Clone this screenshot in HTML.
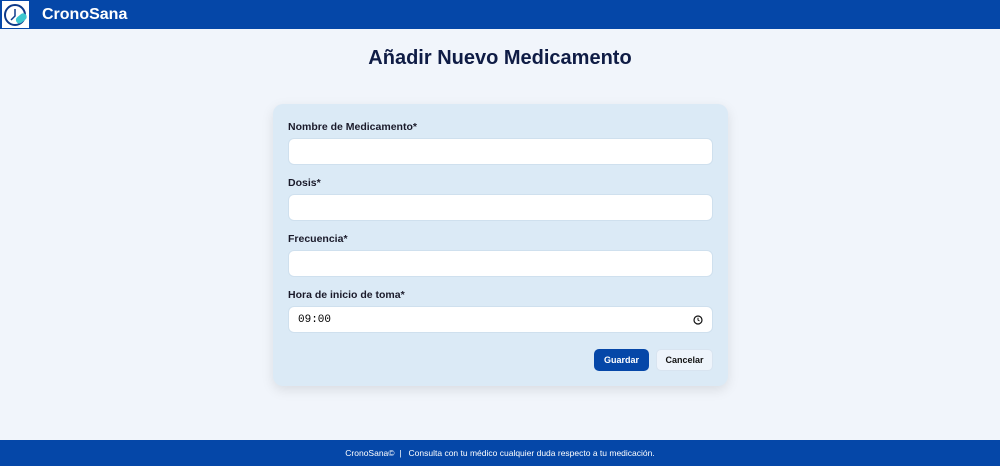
<!DOCTYPE html>
<html><head><meta charset="utf-8"><style>
*{box-sizing:border-box;margin:0;padding:0}
body{width:1000px;height:466px;background:#f1f5fb;font-family:"Liberation Sans",sans-serif;position:relative;overflow:hidden}
.nav{height:29px;background:#0547a8;display:flex;align-items:center}
.logo{width:29px;height:29px;background:#fff;margin-left:1px;border:1px solid #0547a8}
.brand{color:#fff;font-weight:bold;font-size:16px;margin-left:12px}
h1{text-align:center;color:#0f1c45;font-size:20px;font-weight:bold;margin-top:18px}
.card{position:absolute;left:273px;top:104px;width:455px;height:282px;background:#dbeaf6;border-radius:10px;box-shadow:0 4px 12px rgba(0,0,0,.1);padding:0 15px}
label{display:block;font-size:10.5px;font-weight:bold;color:#1a1a2a;margin-top:17px;height:17px}
.in{height:27px;background:#fff;border:1px solid #cfe0ee;border-radius:6px;position:relative;font-family:"Liberation Mono",monospace;font-size:11px;padding:7px 9px}
.btns{position:absolute;right:15px;top:245px;display:flex;gap:7px}
.b{height:22px;border-radius:5px;font-size:9px;font-weight:bold;display:flex;align-items:center;justify-content:center}
.foot{position:absolute;left:0;bottom:0;width:1000px;height:26px;background:#0547a8;color:#fff;font-size:8.5px;text-align:center;line-height:26px}
</style></head><body>
<div class="nav"><div class="logo"><svg width="27" height="27" viewBox="0 0 27 27"><circle cx="13" cy="14" r="10" fill="none" stroke="#0d3a8a" stroke-width="2"/><path d="M13 8v7l-4 4" fill="none" stroke="#0d3a8a" stroke-width="1.5"/><rect x="13" y="14" width="12" height="7" rx="3.5" transform="rotate(-40 19 17)" fill="#3cc7cf"/></svg></div><span class="brand">CronoSana</span></div>
<h1>Añadir Nuevo Medicamento</h1>
<div class="card">
<label>Nombre de Medicamento*</label><div class="in"></div>
<label style="margin-top:12px">Dosis*</label><div class="in"></div>
<label style="margin-top:12px">Frecuencia*</label><div class="in"></div>
<label style="margin-top:12px">Hora de inicio de toma*</label><div class="in">09:00<svg style="position:absolute;right:9px;top:8px" width="10" height="10" viewBox="0 0 10 10"><circle cx="5" cy="5" r="4" fill="none" stroke="#111" stroke-width="1.2"/><path d="M5 2.8V5l1.5 1" fill="none" stroke="#111" stroke-width="1"/></svg></div>
<div class="btns"><div class="b" style="width:55px;background:#0547a8;color:#fff">Guardar</div><div class="b" style="width:57px;background:#eef4fb;color:#111;border:1px solid #d8e4f0">Cancelar</div></div>
</div>
<div class="foot">CronoSana© &nbsp;| &nbsp; Consulta con tu médico cualquier duda respecto a tu medicación.</div>
</body></html>
